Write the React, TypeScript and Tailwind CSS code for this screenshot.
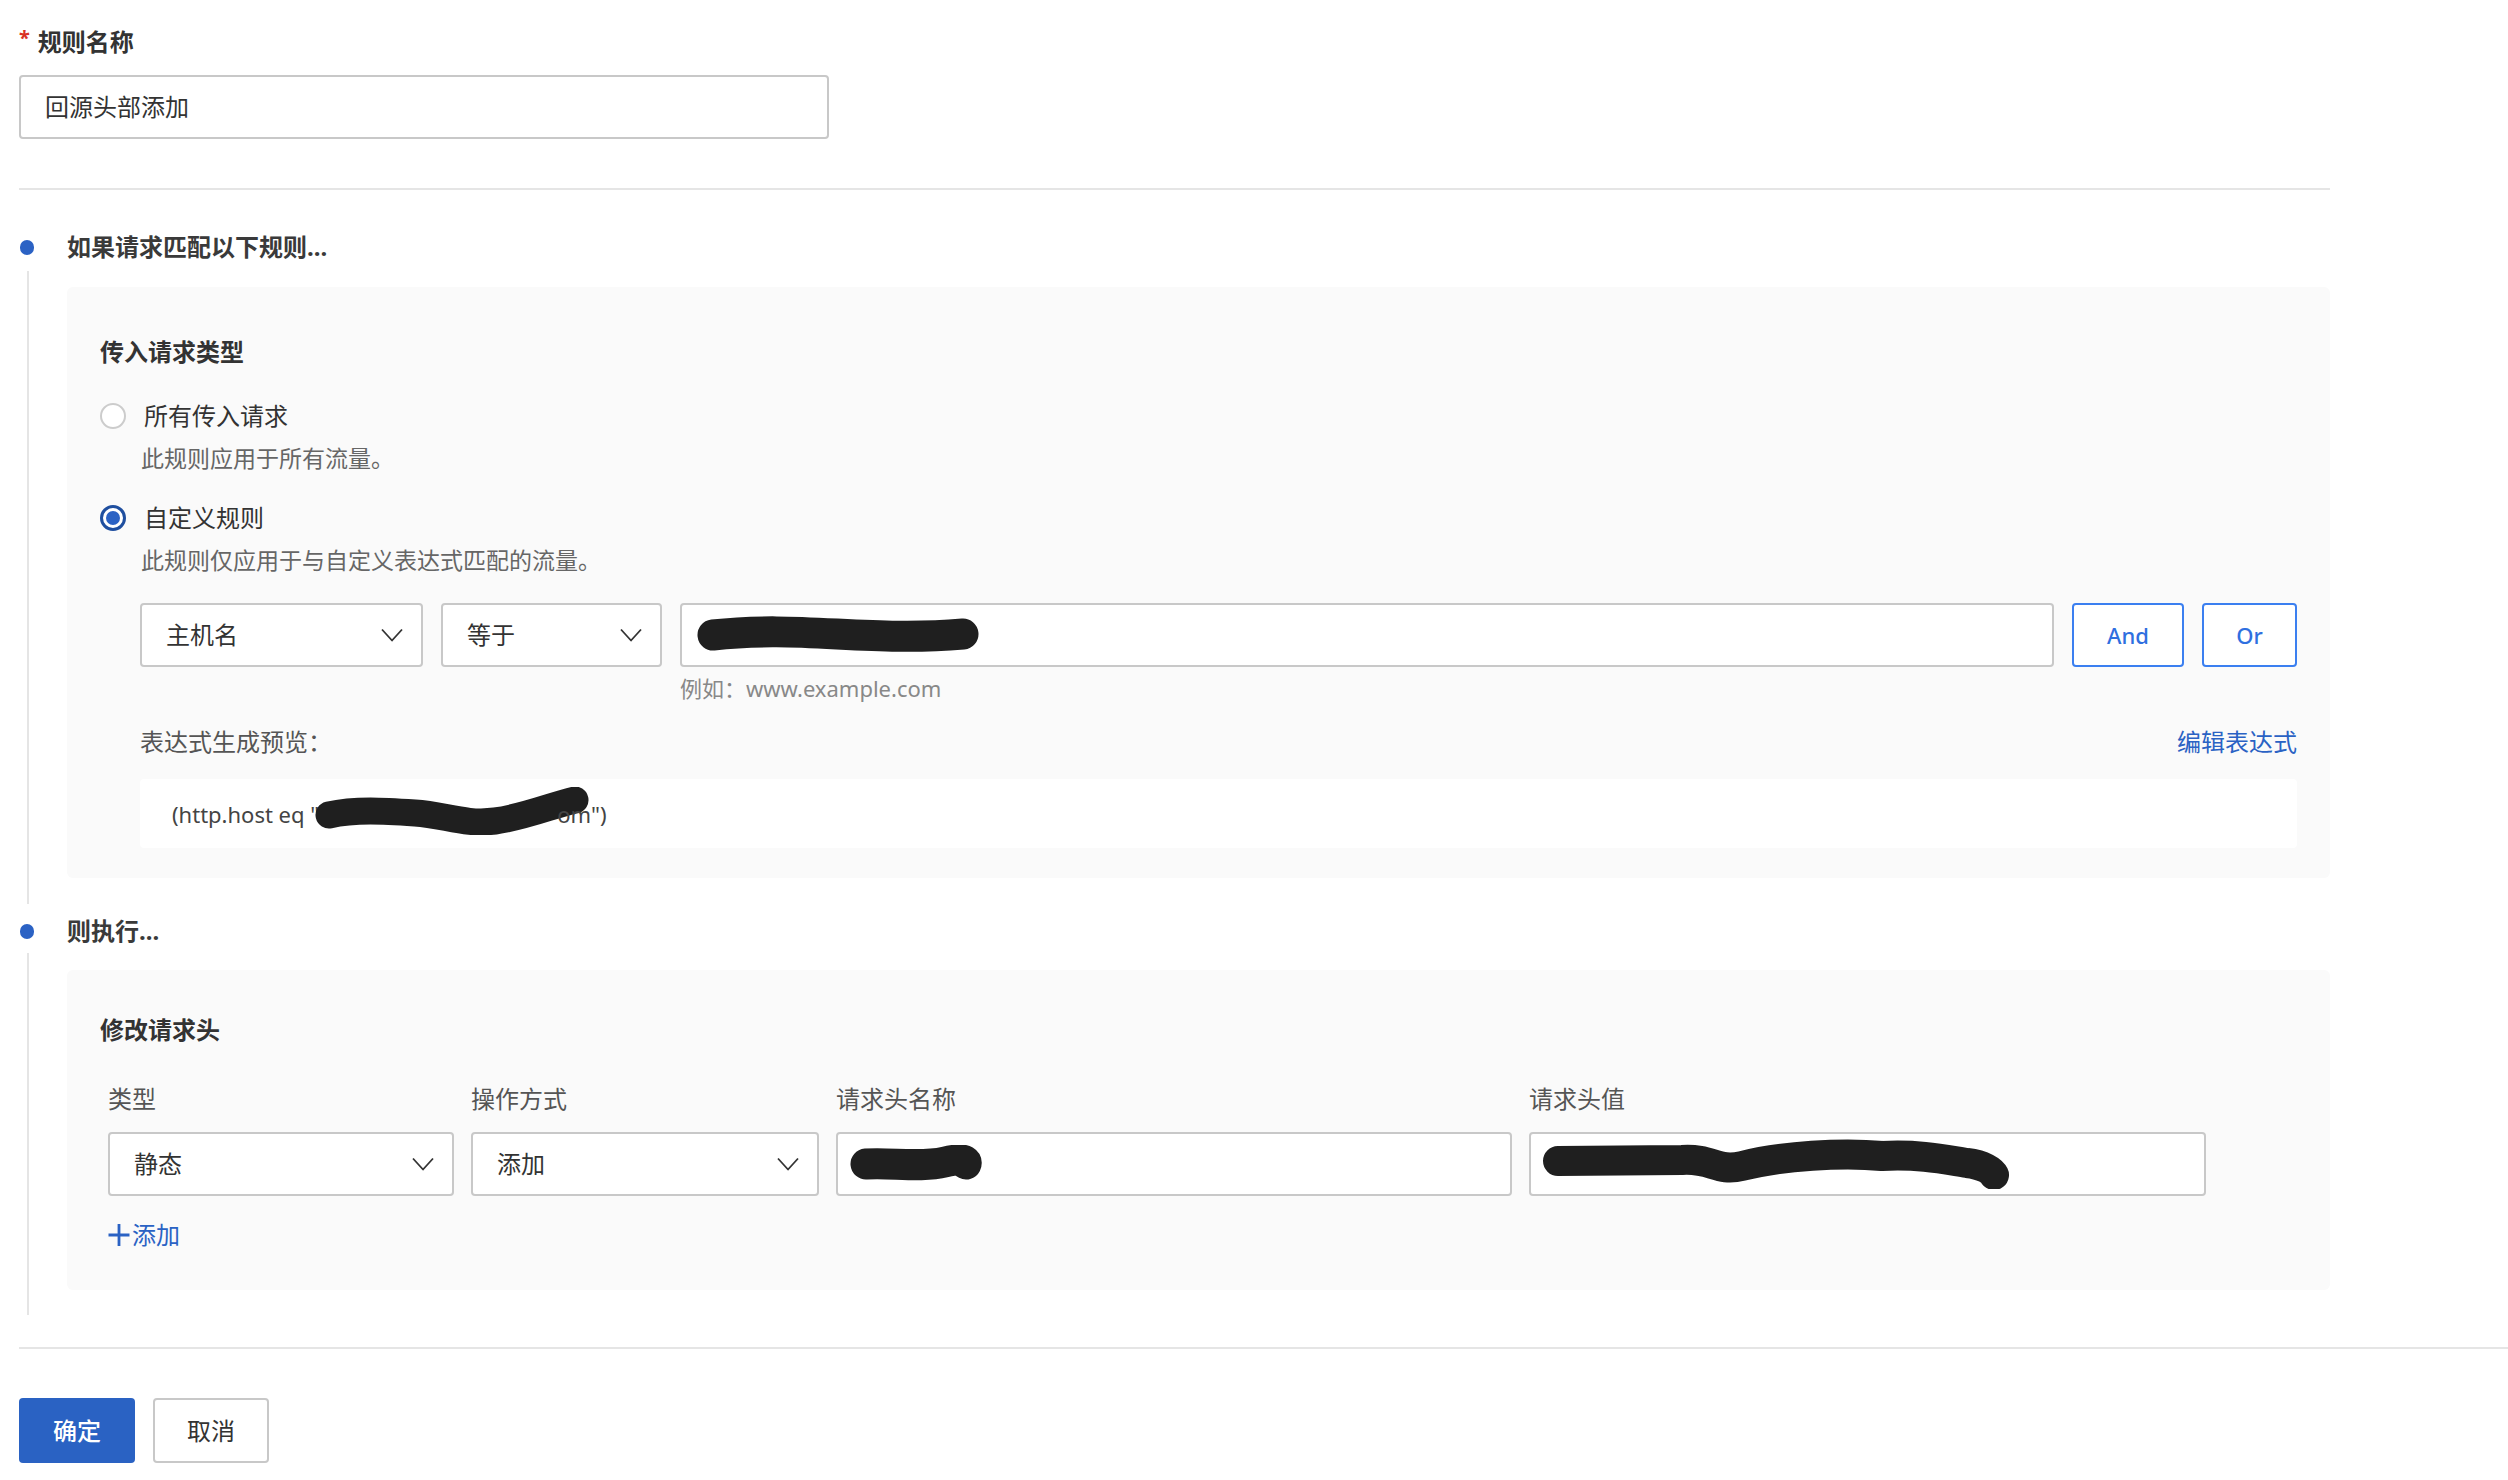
import React from 'react';

const Chevron: React.FC = () => (
  <svg width="22" height="14" viewBox="0 0 22 14" fill="none">
    <polyline points="1,1.5 11,12.5 21,1.5" stroke="#333" strokeWidth="1.8" strokeLinejoin="round" />
  </svg>
);

// Redaction scribbles drawn over hidden values
const Scribble: React.FC<{ w: number; h: number; d: string; sw: number }> = ({ w, h, d, sw }) => (
  <svg width={w} height={h} viewBox={`0 0 ${w} ${h}`} fill="none">
    <path d={d} stroke="#1f1f1f" strokeWidth={sw} strokeLinecap="round" strokeLinejoin="round" />
  </svg>
);

const SelectBox: React.FC<{ value: string; width: string }> = ({ value, width }) => (
  <div className={`${width} h-[64px] shrink-0 border-2 border-[#c8c8c8] rounded-[4px] bg-white flex items-center justify-between pl-[24px] pr-[18px]`}>
    <span className="text-[24px] leading-[32px] text-[#333]">{value}</span>
    <Chevron />
  </div>
);

const Radio: React.FC<{ checked?: boolean }> = ({ checked }) =>
  checked ? (
    <span className="w-[26px] h-[26px] rounded-full border-[3px] border-[#1f4f9f] bg-white flex items-center justify-center">
      <span className="w-[14px] h-[14px] rounded-full bg-[#2b62c4]" />
    </span>
  ) : (
    <span className="w-[26px] h-[26px] rounded-full border-2 border-[#cccccc] bg-white" />
  );

const SectionHead: React.FC<{ title: string; className?: string }> = ({ title, className = '' }) => (
  <div className={`flex items-center h-[32px] ${className}`}>
    <span className="ml-[1px] w-[14px] h-[15px] rounded-full bg-[#2b62c4]" />
    <span className="ml-[33px] text-[24px] leading-[32px] font-bold text-[#3a3a3a]">{title}</span>
  </div>
);

export default function App() {
  return (
    <div className="min-h-screen w-full bg-white pl-[19px] pt-[26px] font-[family-name:'Noto_Sans','Noto_Sans_CJK_SC',sans-serif]">
      <div className="w-[2311px]">
        {/* 规则名称 */}
        <div className="flex items-start h-[32px]">
          <span className="text-[#d93025] text-[20px] leading-[24px] font-bold">*</span>
          <span className="ml-[8px] text-[24px] leading-[32px] font-bold text-[#333]">规则名称</span>
        </div>
        <div className="mt-[17px] w-[810px] h-[64px] border-2 border-[#c8c8c8] rounded-[4px] flex items-center pl-[24px]">
          <span className="text-[24px] leading-[32px] text-[#333]">回源头部添加</span>
        </div>

        <div className="mt-[49px] h-[2px] bg-[#e5e5e5]" />

        {/* 如果请求匹配以下规则 */}
        <SectionHead title="如果请求匹配以下规则..." className="mt-[41px]" />
        <div className="mt-[8px] ml-[8px] border-l-2 border-[#e5e5e5] pl-[38px] pt-[16px] pb-[26px]">
          <div className="bg-[#fafafa] rounded-md pl-[33px] pr-[33px] pt-[49px] pb-[30px]">
            <div className="text-[24px] leading-[32px] font-bold text-[#333]">传入请求类型</div>

            <div className="mt-[32px] flex items-center h-[32px]">
              <Radio />
              <span className="ml-[18px] text-[24px] leading-[32px] text-[#333]">所有传入请求</span>
            </div>
            <div className="mt-[10px] pl-[41px] text-[23px] leading-[32px] text-[#666]">此规则应用于所有流量。</div>

            <div className="mt-[28px] flex items-center h-[32px]">
              <Radio checked />
              <span className="ml-[18px] text-[24px] leading-[32px] text-[#333]">自定义规则</span>
            </div>
            <div className="mt-[10px] pl-[41px] text-[23px] leading-[32px] text-[#666]">此规则仅应用于与自定义表达式匹配的流量。</div>

            <div className="pl-[40px]">
              <div className="mt-[27px] flex gap-[18px]">
                <SelectBox value="主机名" width="w-[283px]" />
                <SelectBox value="等于" width="w-[221px]" />
                <div className="flex-1 flex flex-col">
                  <div className="h-[64px] border-2 border-[#c8c8c8] rounded-[4px] bg-white flex items-center pl-[15px]">
                    <Scribble w={284} h={40} sw={31} d="M16 20 C 60 15, 100 17, 140 19 S 220 23, 266 19" />
                  </div>
                  <div className="mt-[6px] text-[22px] leading-[30px] text-[#888]">例如：www.example.com</div>
                </div>
                <button className="w-[112px] h-[64px] border-2 border-[#3b7ff0] rounded-[4px] bg-white text-[#2f6fe0] text-[22px] font-medium">And</button>
                <button className="w-[95px] h-[64px] border-2 border-[#3b7ff0] rounded-[4px] bg-white text-[#2f6fe0] text-[22px] font-medium">Or</button>
              </div>

              <div className="mt-[24px] flex items-center justify-between h-[30px]">
                <span className="text-[24px] leading-[30px] text-[#555]">表达式生成预览：</span>
                <span className="text-[24px] leading-[30px] text-[#2a62c4]">编辑表达式</span>
              </div>

              <div className="mt-[22px] h-[69px] bg-white rounded-[4px] flex items-center pl-[32px] text-[22px] leading-[30px] text-[#444]">
                <span>(http.host eq "</span>
                <span className="relative inline-block w-[238px] h-[30px]">
                  <span className="absolute left-[-4px] top-[-12px]">
                    <Scribble w={275} h={48} sw={27} d="M14 28 C 40 22, 70 24, 100 26 C 130 28, 150 38, 180 34 C 210 30, 238 18, 260 13" />
                  </span>
                </span>
                <span className="relative">om")</span>
              </div>
            </div>
          </div>
        </div>

        {/* 则执行 */}
        <SectionHead title="则执行..." className="mt-[11px]" />
        <div className="mt-[6px] ml-[8px] border-l-2 border-[#e5e5e5] pl-[38px] pt-[17px] pb-[25px]">
          <div className="bg-[#fafafa] rounded-md pl-[33px] pr-[33px] pt-[44px] pb-[39px]">
            <div className="text-[24px] leading-[32px] font-bold text-[#333]">修改请求头</div>

            <div className="pl-[8px]">
              <div className="mt-[37px] grid grid-cols-[346px_348px_676px_677px] gap-x-[17px]">
                <span className="text-[24px] leading-[32px] text-[#555]">类型</span>
                <span className="text-[24px] leading-[32px] text-[#555]">操作方式</span>
                <span className="text-[24px] leading-[32px] text-[#555]">请求头名称</span>
                <span className="text-[24px] leading-[32px] text-[#555]">请求头值</span>
              </div>
              <div className="mt-[17px] grid grid-cols-[346px_348px_676px_677px] gap-x-[17px]">
                <SelectBox value="静态" width="w-full" />
                <SelectBox value="添加" width="w-full" />
                <div className="h-[64px] border-2 border-[#c8c8c8] rounded-[4px] bg-white flex items-center pl-[12px]">
                  <Scribble w={132} h={38} sw={31} d="M16 19 C 40 17, 70 23, 95 17 S 116 19, 116 19" />
                </div>
                <div className="h-[64px] border-2 border-[#c8c8c8] rounded-[4px] bg-white flex items-center pl-[11px]">
                  <Scribble w={470} h={50} sw={30} d="M16 22 L 140 21 C 170 19, 175 33, 200 27 C 240 17, 300 13, 340 17 C 380 15, 405 21, 425 24 C 442 26, 450 32, 452 36" />
                </div>
              </div>

              <div className="mt-[23px] flex items-center h-[32px] text-[#2a62c4]">
                <svg width="22" height="24" viewBox="0 0 22 24" fill="none">
                  <path d="M11 1 V23 M0.5 12 H21.5" stroke="#2a62c4" strokeWidth="2.8" />
                </svg>
                <span className="ml-[2px] text-[24px] leading-[32px]">添加</span>
              </div>
            </div>
          </div>
        </div>
      </div>

      <div className="mt-[32px] h-[2px] bg-[#e5e5e5]" />

      <div className="mt-[49px] flex gap-[18px]">
        <button className="w-[116px] h-[65px] rounded-[4px] bg-[#2a62c3] text-white text-[24px] font-medium">确定</button>
        <button className="w-[116px] h-[65px] rounded-[4px] border-2 border-[#c8c8c8] bg-white text-[#333] text-[24px]">取消</button>
      </div>
    </div>
  );
}
